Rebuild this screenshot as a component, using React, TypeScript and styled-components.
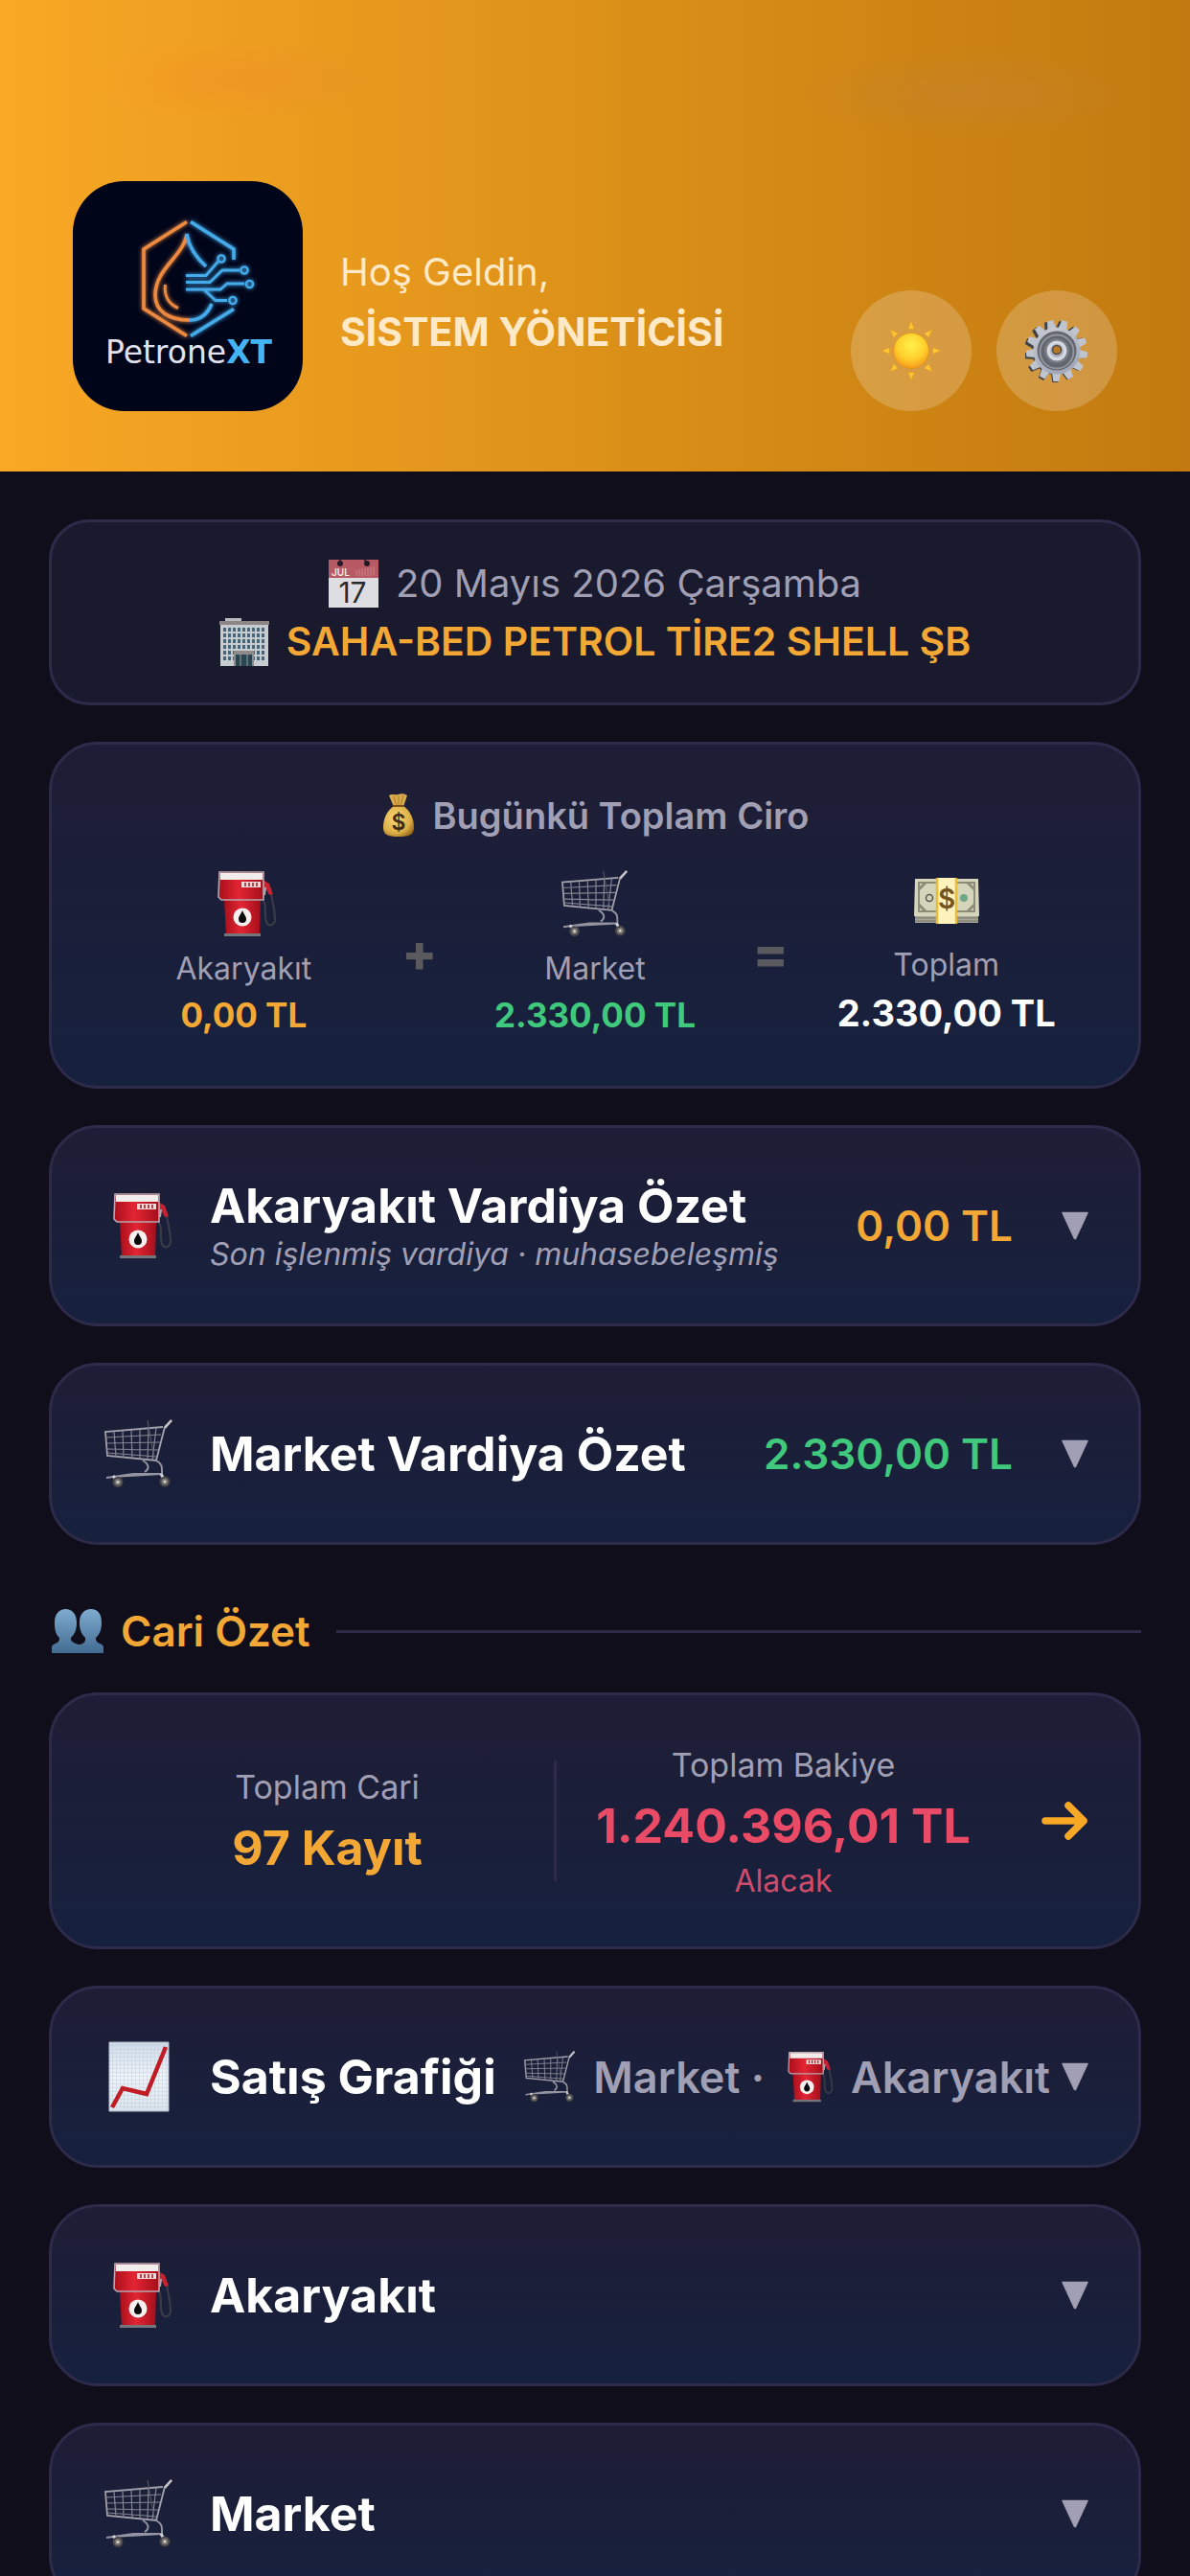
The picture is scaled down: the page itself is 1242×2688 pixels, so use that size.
import React, { useState } from 'react';
import styled, { createGlobalStyle } from 'styled-components';

const c = {
  bg: '#0f0e1a',
  panel: '#1a1a2e',
  panelTop: '#1f1d35',
  panelBottom: '#16213e',
  border: '#2d2a4a',
  muted: '#a09fb3',
  orange: '#f3a836',
  green: '#40c97c',
  red: '#e94a66',
  white: '#ffffff',
  operator: '#5a5a5e',
};

const GlobalStyle = createGlobalStyle`
  *, *::before, *::after { box-sizing: border-box; }
  body {
    margin: 0;
    background: ${c.bg};
    font-family: Inter, "Noto Sans", sans-serif;
    color: ${c.white};
  }
  h1, h2, h3, p { margin: 0; font: inherit; }
  button { font: inherit; color: inherit; border: 0; background: none; padding: 0; cursor: pointer; }
  svg { display: block; flex: none; }
`;

const Screen = styled.div`
  height: 100vh;
  overflow: hidden;
`;

const Header = styled.header`
  display: flex;
  align-items: flex-end;
  padding: 189px 76px 63px;
  background:
    radial-gradient(ellipse 150px 44px at 20% 17%, rgba(240, 140, 40, 0.4), transparent),
    radial-gradient(ellipse 180px 48px at 81% 20%, rgba(196, 130, 50, 0.5), transparent),
    linear-gradient(90deg, #f9a825 0%, #d68c16 60%, #c27a10 100%);
`;

const LogoTile = styled.div`
  width: 240px;
  height: 240px;
  border-radius: 54px;
  background: #01051a;
  overflow: hidden;
`;

const Greeting = styled.div`
  flex: 1;
  margin-left: 39px;
  padding-bottom: 52px;
  font-size: 40px;
  line-height: 62px;
  color: #ffe9c6;
`;

const UserName = styled.h1`
  font-size: 41px;
  font-weight: 700;
`;

const HeaderActions = styled.div`
  display: flex;
  gap: 26px;
`;

const RoundButton = styled.button`
  display: grid;
  place-items: center;
  width: 126px;
  height: 126px;
  border-radius: 50%;
  background: rgba(255, 255, 255, 0.2);
`;

const Content = styled.main`
  display: flex;
  flex-direction: column;
  gap: 38px;
  padding: 50px 51px;
`;

const InfoCard = styled.section`
  display: flex;
  flex-direction: column;
  align-items: center;
  padding: 33px 51px;
  border: 3px solid ${c.border};
  border-radius: 42px;
  background: ${c.panel};
  line-height: 61px;
`;

const InfoLine = styled.p<{ $strong?: boolean }>`
  display: flex;
  align-items: center;
  gap: 18px;
  color: ${(p) => (p.$strong ? c.orange : c.muted)};
  font-size: ${(p) => (p.$strong ? 41 : 40)}px;
  font-weight: ${(p) => (p.$strong ? 600 : 400)};
`;

const Card = styled.section`
  padding: 51px;
  border: 3px solid ${c.border};
  border-radius: 51px;
  background: linear-gradient(180deg, ${c.panelTop}, ${c.panelBottom});
`;

const TotalsTitle = styled.h2`
  display: flex;
  justify-content: center;
  align-items: center;
  gap: 18px;
  font-size: 38px;
  line-height: 46px;
  font-weight: 600;
  color: ${c.muted};
`;

const Totals = styled.div`
  display: flex;
  align-items: center;
  margin-top: 34px;
`;

const TotalColumn = styled.div`
  flex: 1 1 0;
  display: flex;
  flex-direction: column;
  align-items: center;
`;

const Operator = styled.span`
  width: 68px;
  text-align: center;
  font-size: 54px;
  line-height: 60px;
  font-weight: 800;
  color: ${c.operator};
`;

const Label = styled.span`
  margin-top: 8px;
  font-size: 32px;
  line-height: 50px;
  color: ${c.muted};
`;

const Amount = styled.strong<{ $tone: string; $large?: boolean }>`
  font-size: ${(p) => (p.$large ? 38 : 35)}px;
  line-height: ${(p) => (p.$large ? 50 : 46)}px;
  font-weight: 700;
  color: ${(p) => p.$tone};
  white-space: nowrap;
`;

const RowCard = styled(Card).attrs({ as: 'button', type: 'button' })`
  display: flex;
  align-items: center;
  width: 100%;
  min-height: 190px;
  text-align: left;
`;

const IconSlot = styled.span`
  display: grid;
  place-items: center;
  width: 80px;
  margin-right: 34px;
`;

const RowText = styled.span`
  flex: 1;
  display: flex;
  flex-direction: column;
  white-space: nowrap;
`;

const RowTitle = styled.span`
  font-size: 50px;
  line-height: 60px;
  font-weight: 700;
`;

const RowNote = styled.span`
  font-size: 32px;
  line-height: 42px;
  font-style: italic;
  color: ${c.muted};
`;

const RowValue = styled.span<{ $tone: string }>`
  margin-right: 50px;
  font-size: 44px;
  font-weight: 600;
  color: ${(p) => p.$tone};
`;

const RowMeta = styled.span`
  display: flex;
  align-items: center;
  gap: 18px;
  margin-right: 11px;
  font-size: 45px;
  font-weight: 600;
  color: ${c.muted};
  white-space: nowrap;
`;

const SectionHeading = styled.h2`
  display: flex;
  align-items: center;
  gap: 18px;
  margin: 23px 0 -3px 3px;
  font-size: 44px;
  line-height: 58px;
  font-weight: 600;
  color: ${c.orange};

  &::after {
    content: '';
    flex: 1;
    height: 3px;
    margin-left: 9px;
    background: ${c.border};
  }
`;

const AccountCard = styled(Card).attrs({ as: 'button', type: 'button' })`
  display: flex;
  align-items: center;
  width: 100%;
`;

const AccountColumn = styled.span`
  flex: 1 1 0;
  display: flex;
  flex-direction: column;
  align-items: center;
  gap: 12px;
`;

const AccountLabel = styled.span`
  font-size: 34px;
  line-height: 44px;
  color: ${c.muted};
`;

const AccountValue = styled.strong<{ $tone: string }>`
  font-size: 50px;
  line-height: 58px;
  font-weight: 700;
  color: ${(p) => p.$tone};
  white-space: nowrap;
`;

const AccountNote = styled.span`
  font-size: 32px;
  line-height: 34px;
  color: #cf4c6c;
`;

const Divider = styled.span`
  width: 3px;
  height: 126px;
  background: ${c.border};
`;

const ArrowSlot = styled.span`
  display: flex;
  justify-content: flex-end;
  width: 83px;
`;

const Logo = () => (
  <svg width="240" height="240" viewBox="0 0 240 240" role="img" aria-label="PetroneXT">
    <defs>
      <filter id="glow" x="-30%" y="-30%" width="160%" height="160%">
        <feGaussianBlur stdDeviation="2" result="b" />
        <feMerge>
          <feMergeNode in="b" />
          <feMergeNode in="SourceGraphic" />
        </feMerge>
      </filter>
    </defs>
    <g fill="none" strokeWidth="3.6" filter="url(#glow)">
      <g stroke="#ee8a40">
        <path d="M119 42.500L74 71v62l45 28.500" />
        <path d="M119 55C116 78 86 91 86 119c0 16 13 26 36 26" />
        <path d="M96.500 108c-1.500 12 4 20.500 13.500 24.500" strokeWidth="3" />
      </g>
      <g stroke="#45aaea">
        <path d="M123 42.500L168 71v11M168 133.500l-45 28" />
        <path d="M119 55c2 14 10 25 20 34M122 145c10 0 18-5 23-17" />
        <path d="M118 98.500h21L151.500 84M118 105.500h25l13-12.500h18M118 113h36l7-6h18M137 113.500l12 11h12" strokeWidth="2.800" />
        <circle cx="155" cy="81" r="3.600" strokeWidth="2.400" />
        <circle cx="179" cy="93" r="3.600" strokeWidth="2.400" />
        <circle cx="184.500" cy="107.500" r="3.600" strokeWidth="2.400" />
        <circle cx="167" cy="124.500" r="3.600" strokeWidth="2.400" />
      </g>
    </g>
    <text x="121" y="190" textAnchor="middle" fontFamily="'DejaVu Sans', sans-serif" fontSize="33" fill="#e2e2ee">
      Petrone
      <tspan fill="#45b4f4" fontWeight="700">XT</tspan>
    </text>
  </svg>
);

const SunIcon = () => (
  <svg width="62" height="62" viewBox="0 0 62 62" aria-hidden="true">
    <defs>
      <radialGradient id="sun" cx="0.5" cy="0.35" r="0.65">
        <stop offset="0" stopColor="#fff04a" />
        <stop offset="0.6" stopColor="#ffd02b" />
        <stop offset="1" stopColor="#f59a1b" />
      </radialGradient>
    </defs>
    {[0, 45, 90, 135, 180, 225, 270, 315].map((a) => (
      <path key={a} d="M31 0l3.400 8.500h-6.800z" fill="#ffc535" stroke="#e39a20" strokeWidth="0.600" transform={`rotate(${a} 31 31)`} />
    ))}
    <circle cx="31" cy="31" r="18.500" fill="url(#sun)" stroke="#e58e1b" strokeWidth="0.800" />
  </svg>
);

const TEETH = Array.from({ length: 13 }, (_, i) => (i * 360) / 13 + 15);

const GearIcon = () => (
  <svg width="66" height="66" viewBox="0 0 66 66" aria-hidden="true">
    <defs>
      <linearGradient id="gear" x1="0" y1="0" x2="0.4" y2="1">
        <stop offset="0" stopColor="#c9ccd3" />
        <stop offset="1" stopColor="#a3a9b8" />
      </linearGradient>
    </defs>
    {TEETH.map((a) => (
      <path key={a} d="M27 12l2-11h6l2 11z" fill="#3f4247" transform={`translate(-2 1) rotate(${a} 33 33)`} />
    ))}
    <circle cx="31" cy="34" r="24" fill="#4a4d53" />
    {TEETH.map((a) => (
      <path key={a} d="M28 12l2-11h6l2 11z" fill="#bfc4cf" transform={`rotate(${a} 33 33)`} />
    ))}
    <circle cx="33" cy="33" r="24.500" fill="url(#gear)" />
    <circle cx="33" cy="33" r="20.500" fill="#62666e" />
    <circle cx="33" cy="34" r="17.500" fill="none" stroke="#8f949d" strokeWidth="2" />
    <circle cx="33" cy="33" r="13" fill="#777c86" />
    <circle cx="33" cy="33" r="10.500" fill="#d5d9e2" />
    <circle cx="33" cy="33" r="7" fill="#aab0bd" />
    <circle cx="33" cy="32" r="4.500" fill="#b97a22" stroke="#4a4a50" strokeWidth="1.500" />
  </svg>
);

const CalendarIcon = () => (
  <svg width="52" height="52" viewBox="0 0 52 52" aria-hidden="true">
    <path d="M0 1h52v50H0z" fill="#dedee2" />
    <path d="M0 1h52v19H0z" fill="#b75a64" />
    <path d="M29 12v6M32 11v7M35 10v8M38 10v8M41 9v9M44 9v9M47 8v9" stroke="#cf858c" strokeWidth="1" />
    <circle cx="12" cy="5" r="3" fill="#251a26" />
    <circle cx="40" cy="5" r="3" fill="#251a26" />
    <path d="M12 5V0M40 5l-3-5" stroke="#251a26" strokeWidth="1.500" />
    <text x="3" y="18" fontSize="10" fontWeight="600" fill="#f2e6e8">JUL</text>
    <text x="25" y="46" textAnchor="middle" fontSize="30" fontWeight="400" fill="#2a2a2d">17</text>
  </svg>
);

const BuildingIcon = () => (
  <svg width="52" height="50" viewBox="0 0 52 50" aria-hidden="true">
    <path d="M6 0h17v4H6z" fill="#b8bcc0" />
    <path d="M1 5h50v45H1z" fill="#c6cccf" />
    <path d="M0 3h52v4H0z" fill="#8d8686" />
    {[10, 16, 22, 28, 34, 40].map((y) =>
      [4, 9, 14, 19, 24, 29, 34, 39, 44].map((x) => (
        <path key={`${x}-${y}`} d={`M${x} ${y}h3v4h-3z`} fill="#466579" />
      )),
    )}
    <path d="M15 34h21v16H15z" fill="#8e8b8b" />
    <path d="M17 38h17v12H17z" fill="#2b4650" />
    <path d="M22 38v12M29 38v12" stroke="#8fa0a5" strokeWidth="1" />
  </svg>
);

const MoneyBagIcon = () => (
  <svg width="36" height="46" viewBox="0 0 36 46" aria-hidden="true">
    <defs>
      <radialGradient id="bag" cx="0.4" cy="0.4" r="0.7">
        <stop offset="0" stopColor="#f7d878" />
        <stop offset="0.7" stopColor="#dcae45" />
        <stop offset="1" stopColor="#96691c" />
      </radialGradient>
    </defs>
    <path d="M8 2c3-2 5 0 9-1 4-1 7-1 10 1l-4 12H13z" fill="#d9ab4c" />
    <path d="M13 3l3 10M18 2v11M23 2l-3 11" stroke="#a87a2c" strokeWidth="1" />
    <path d="M13 13h10c7 5 11 13 11 22 0 8-4 10-16 10S2 43 2 35c0-9 4-17 11-22z" fill="url(#bag)" />
    <path d="M12 13h12" stroke="#7a4d1a" strokeWidth="2" />
    <text x="18" y="38" textAnchor="middle" fontSize="23" fontWeight="600" fill="#3f2c10">$</text>
  </svg>
);

const PumpIcon = ({ size = 70 }: { size?: number }) => (
  <svg width={size} height={size} viewBox="0 0 70 70" aria-hidden="true">
    <defs>
      <linearGradient id="pumpBody" x1="0" x2="1">
        <stop offset="0" stopColor="#a90f1c" />
        <stop offset="0.45" stopColor="#e32533" />
        <stop offset="1" stopColor="#a30f1b" />
      </linearGradient>
    </defs>
    <path d="M56 32c4 5 0 14 3 22 3 6 9 3 9-3 0-12-3-17-4-27" fill="none" stroke="#383c47" strokeWidth="2.200" />
    <path d="M55 10l7 4 4 11-4 1-3-6-3 6z" fill="#c72231" />
    <path d="M58 18l-1 8" stroke="#a9a9b1" strokeWidth="2" />
    <path d="M15 31h38l-1 36H17z" fill="url(#pumpBody)" />
    <path d="M15 66h38v3H15z" fill="#77757c" />
    <path d="M10 2h46v29H12L9 28z" fill="url(#pumpBody)" stroke="#b7a7af" strokeWidth="1.600" />
    <path d="M11 3h44v7H11z" fill="#f1eded" />
    <path d="M33 12h20v6H33z" fill="#efdada" />
    <path d="M37 13v4M41 13v4M45 13v4M49 13v4" stroke="#a1202b" strokeWidth="1.600" />
    <circle cx="34" cy="49" r="9.500" fill="#f7f0ee" />
    <path d="M34 42c2 5 4 6 4 9a4 4 0 0 1-8 0c0-3 2-4 4-9z" fill="#0b0b0d" />
  </svg>
);

const CartIcon = ({ size = 72 }: { size?: number }) => (
  <svg width={size} height={size} viewBox="0 0 72 72" fill="none" aria-hidden="true">
    <path d="M70 1l-7 7-9 35L3 38 1 13l60-5" stroke="#a3a2ac" strokeWidth="1.800" />
    <path d="M1 19l58-3M2 25l56-1M2 31l54 1M3 35l52 4M10 13l2 26M19 12l1 28M28 11l1 29M37 10v31M46 10l-1 32M54 9l-4 33" stroke="#868692" strokeWidth="1.200" />
    <path d="M45 1l7 40" stroke="#5c5c68" strokeWidth="1" />
    <path d="M70 1l-7 8" stroke="#c5c2c8" strokeWidth="2.600" />
    <path d="M40 43c7 4 7 9 2 12M54 43c7 4 6 7 6 14H30L2 61M8 60l52-3" stroke="#9493a0" strokeWidth="2" />
    <path d="M9 59l5 6M59 57l4 7" stroke="#d4d1d5" strokeWidth="3" />
    <circle cx="14" cy="65.500" r="4.500" fill="#77736f" stroke="#47454a" strokeWidth="2" />
    <circle cx="63" cy="65" r="4.500" fill="#77736f" stroke="#47454a" strokeWidth="2" />
    <circle cx="14" cy="65.500" r="1.500" fill="#d8d5d0" />
    <circle cx="63" cy="65" r="1.500" fill="#d8d5d0" />
  </svg>
);

const CashIcon = () => (
  <svg width="70" height="66" viewBox="0 -8 70 66" aria-hidden="true">
    <path d="M2 39h66v8H2z" fill="#a5a695" />
    <path d="M2 42h66M2 45h66" stroke="#75776a" strokeWidth="1" />
    <path d="M2 1h66l1 39H1z" fill="#d5d5bc" />
    <path d="M6 5h58v30H6z" fill="none" stroke="#8c8e79" strokeWidth="2" />
    <path d="M6 12l7-7M64 12l-7-7M6 28l7 7M64 28l-7 7" stroke="#8c8e79" strokeWidth="3" />
    <circle cx="17" cy="21" r="3.500" fill="none" stroke="#56584e" strokeWidth="1.500" />
    <circle cx="53" cy="21" r="4" fill="#6fa886" />
    <path d="M24 0h22v48H24z" fill="#fff3bd" />
    <path d="M25 0v48M45 0v48" stroke="#e9bd37" strokeWidth="2.500" />
    <text x="35" y="32" textAnchor="middle" fontSize="28" fontWeight="600" fill="#73551b">$</text>
  </svg>
);

const PeopleIcon = () => (
  <svg width="54" height="46" viewBox="0 0 54 46" aria-hidden="true">
    <defs>
      <linearGradient id="people" x1="0" y1="0" x2="0" y2="1">
        <stop offset="0" stopColor="#7fabcf" />
        <stop offset="1" stopColor="#426b92" />
      </linearGradient>
    </defs>
    <path d="M26 46v-8c4-2 10-1 9-8-4-4-6-8-6-16C29 5 34 0 41 0s11 5 11 14c0 8-2 12-6 16-1 7 8 5 8 10v6z" fill="url(#people)" />
    <path d="M0 46v-6c0-5 9-3 8-10-4-4-5-8-5-16C3 5 8 0 14.500 0S26 5 26 14c0 8-2 12-6 16-1 8 13 4 15 16z" fill="url(#people)" />
  </svg>
);

const ChartIcon = () => (
  <svg width="64" height="74" viewBox="0 0 64 74" aria-hidden="true">
    <defs>
      <linearGradient id="paper" x1="0" y1="0" x2="0" y2="1">
        <stop offset="0" stopColor="#cfdbe8" />
        <stop offset="0.5" stopColor="#eef3f8" />
        <stop offset="1" stopColor="#dbe4ee" />
      </linearGradient>
      <pattern id="grid" width="4" height="4" patternUnits="userSpaceOnUse">
        <path d="M4 0H0v4" fill="none" stroke="#b4c4d6" strokeWidth="0.700" />
      </pattern>
    </defs>
    <path d="M1 1h62v72H1z" fill="url(#paper)" />
    <path d="M1 1h62v72H1z" fill="url(#grid)" stroke="#aebccb" />
    <path d="M4 69l11-20 25 6L60 6" fill="none" stroke="#c01c26" strokeWidth="4.500" />
  </svg>
);

const Chevron = () => (
  <svg width="30" height="30" viewBox="0 0 30 30" aria-hidden="true">
    <path d="M2 1.500h26L15.500 28.500h-1z" fill={c.muted} stroke={c.muted} strokeWidth="1.500" strokeLinejoin="round" />
  </svg>
);

const ArrowIcon = () => (
  <svg width="50" height="44" viewBox="0 0 50 44" fill="none" stroke="#f9a825" strokeWidth="7.500" strokeLinecap="round" strokeLinejoin="round" aria-hidden="true">
    <path d="M4 22h40M28 6l16 16-16 16" />
  </svg>
);

type RowProps = {
  icon: React.ReactNode;
  title: string;
  note?: string;
  value?: string;
  tone?: string;
  meta?: React.ReactNode;
};

const SummaryRow = ({ icon, title, note, value, tone = c.white, meta }: RowProps) => {
  const [open, setOpen] = useState(false);
  return (
    <RowCard aria-expanded={open} onClick={() => setOpen(!open)}>
      <IconSlot>{icon}</IconSlot>
      <RowText>
        <RowTitle>{title}</RowTitle>
        {note && <RowNote>{note}</RowNote>}
      </RowText>
      {value && <RowValue $tone={tone}>{value}</RowValue>}
      {meta && <RowMeta>{meta}</RowMeta>}
      <Chevron />
    </RowCard>
  );
};

export default function App() {
  return (
    <Screen>
      <GlobalStyle />
      <Header>
        <LogoTile>
          <Logo />
        </LogoTile>
        <Greeting>
          <p>Hoş Geldin,</p>
          <UserName>SİSTEM YÖNETİCİSİ</UserName>
        </Greeting>
        <HeaderActions>
          <RoundButton type="button" aria-label="Tema">
            <SunIcon />
          </RoundButton>
          <RoundButton type="button" aria-label="Ayarlar">
            <GearIcon />
          </RoundButton>
        </HeaderActions>
      </Header>

      <Content>
        <InfoCard>
          <InfoLine>
            <CalendarIcon />
            20 Mayıs 2026 Çarşamba
          </InfoLine>
          <InfoLine $strong>
            <BuildingIcon />
            SAHA-BED PETROL TİRE2 SHELL ŞB
          </InfoLine>
        </InfoCard>

        <Card>
          <TotalsTitle>
            <MoneyBagIcon />
            Bugünkü Toplam Ciro
          </TotalsTitle>
          <Totals>
            <TotalColumn>
              <PumpIcon />
              <Label>Akaryakıt</Label>
              <Amount $tone={c.orange}>0,00 TL</Amount>
            </TotalColumn>
            <Operator>+</Operator>
            <TotalColumn>
              <CartIcon size={70} />
              <Label>Market</Label>
              <Amount $tone={c.green}>2.330,00 TL</Amount>
            </TotalColumn>
            <Operator>=</Operator>
            <TotalColumn>
              <CashIcon />
              <Label>Toplam</Label>
              <Amount $tone={c.white} $large>2.330,00 TL</Amount>
            </TotalColumn>
          </Totals>
        </Card>

        <SummaryRow
          icon={<PumpIcon />}
          title="Akaryakıt Vardiya Özet"
          note="Son işlenmiş vardiya · muhasebeleşmiş"
          value="0,00 TL"
          tone={c.orange}
        />
        <SummaryRow icon={<CartIcon />} title="Market Vardiya Özet" value="2.330,00 TL" tone={c.green} />

        <SectionHeading>
          <PeopleIcon />
          Cari Özet
        </SectionHeading>

        <AccountCard>
          <AccountColumn>
            <AccountLabel>Toplam Cari</AccountLabel>
            <AccountValue $tone={c.orange}>97 Kayıt</AccountValue>
          </AccountColumn>
          <Divider />
          <AccountColumn>
            <AccountLabel>Toplam Bakiye</AccountLabel>
            <AccountValue $tone={c.red}>1.240.396,01 TL</AccountValue>
            <AccountNote>Alacak</AccountNote>
          </AccountColumn>
          <ArrowSlot>
            <ArrowIcon />
          </ArrowSlot>
        </AccountCard>

        <SummaryRow
          icon={<ChartIcon />}
          title="Satış Grafiği"
          meta={
            <>
              <CartIcon size={54} />
              <span>Market ·</span>
              <PumpIcon size={54} />
              <span>Akaryakıt</span>
            </>
          }
        />
        <SummaryRow icon={<PumpIcon />} title="Akaryakıt" />
        <SummaryRow icon={<CartIcon />} title="Market" />
      </Content>
    </Screen>
  );
}
